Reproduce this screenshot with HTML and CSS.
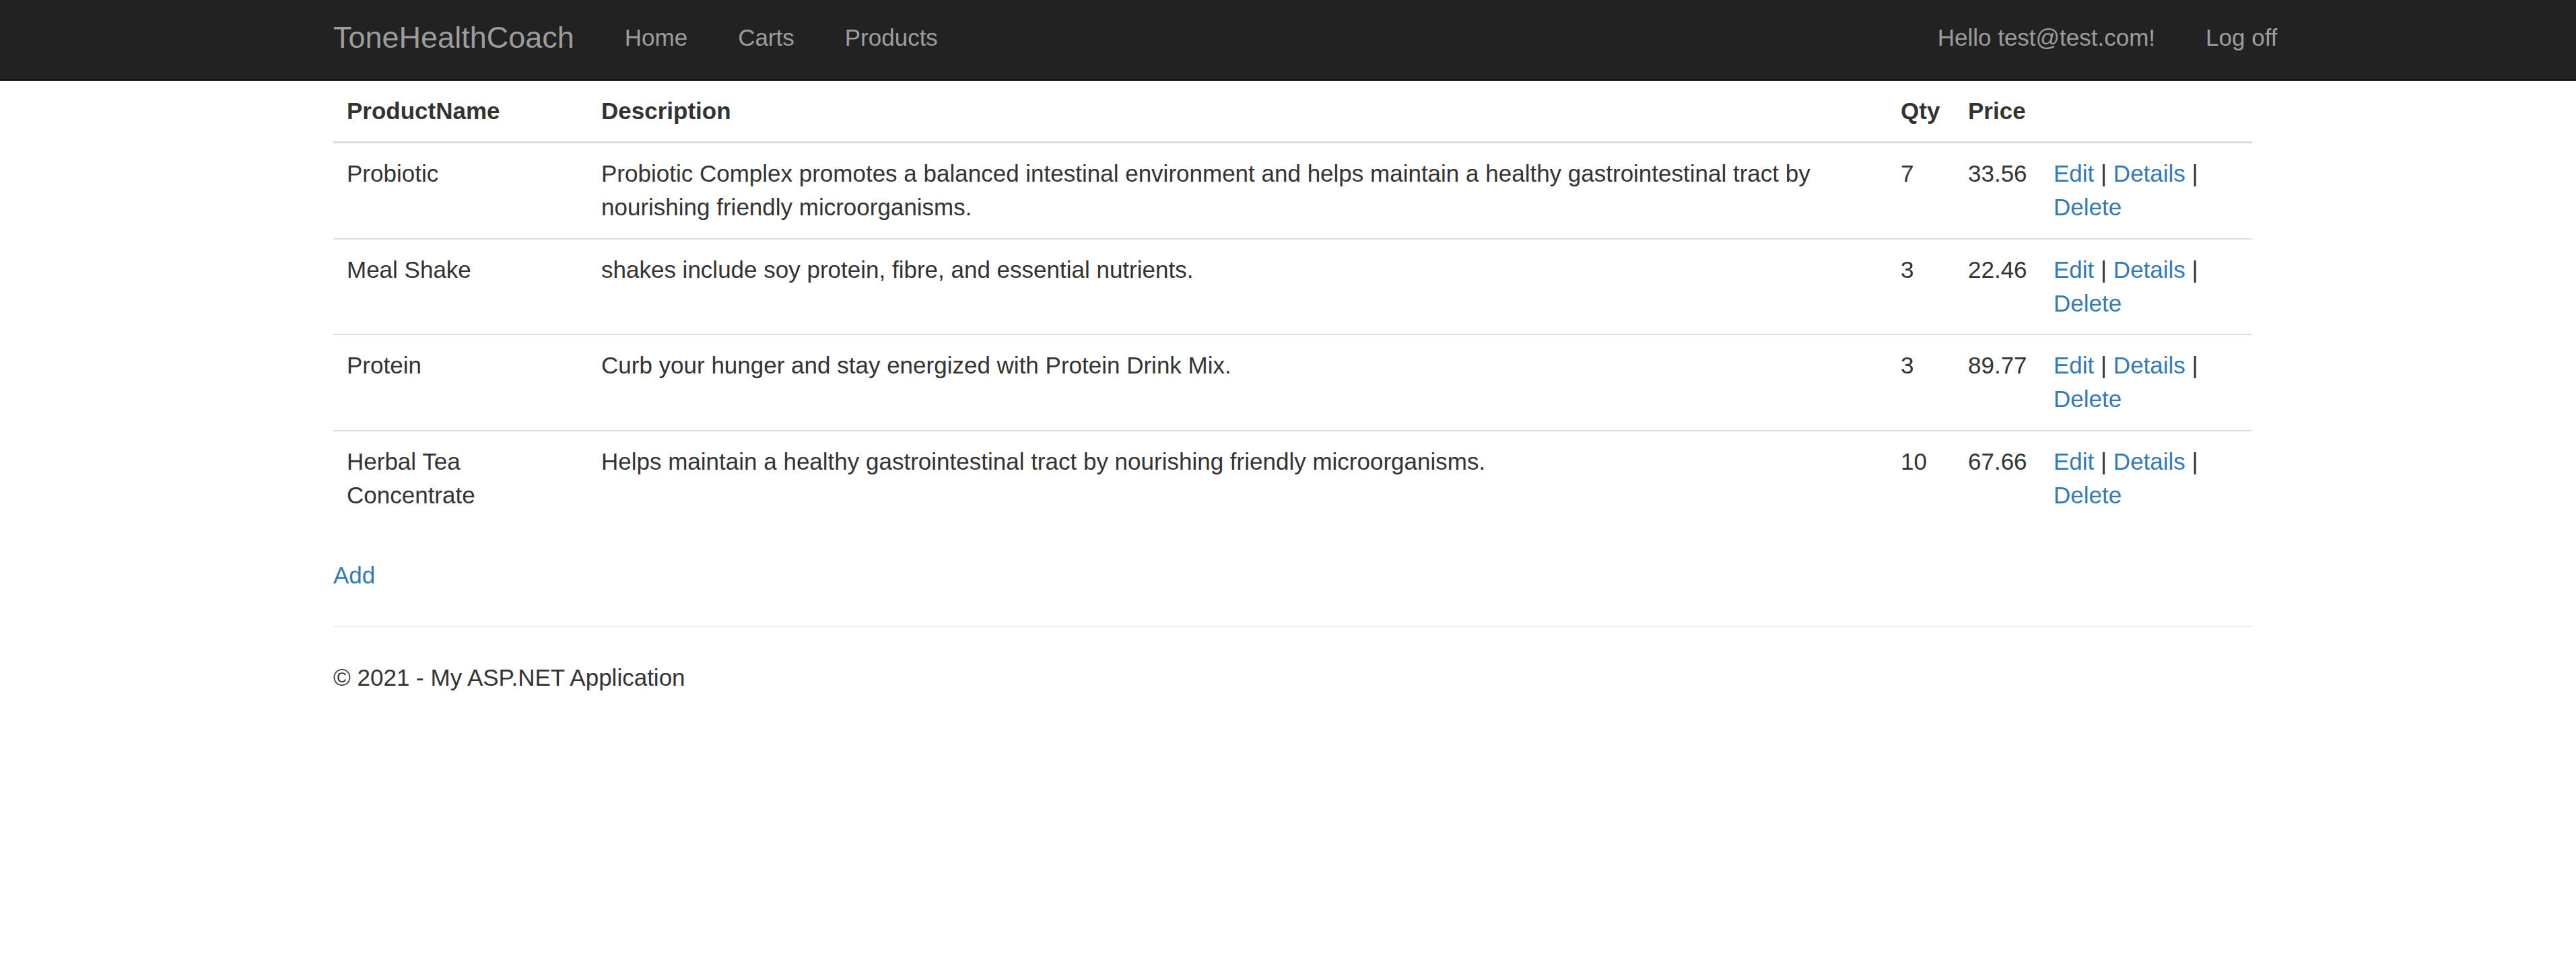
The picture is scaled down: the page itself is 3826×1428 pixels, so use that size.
FILE: index.html
```html
<!DOCTYPE html>
<html lang="en">
<head>
<meta charset="utf-8">
<title>Products - ToneHealthCoach</title>
<link rel="stylesheet" href="styles.css">
</head>
<body>
<header class="navbar">
  <div class="nav-inner">
    <a class="brand" href="#">ToneHealthCoach</a>
    <ul class="nav">
      <li><a href="#">Home</a></li>
      <li><a href="#">Carts</a></li>
      <li><a href="#">Products</a></li>
    </ul>
    <ul class="nav nav-right">
      <li><a href="#">Hello test@test.com!</a></li>
      <li><a href="#">Log off</a></li>
    </ul>
  </div>
</header>
<main class="container">
  <table class="table">
    <colgroup>
      <col class="c-name">
      <col class="c-desc">
      <col class="c-qty">
      <col class="c-price">
      <col class="c-act">
    </colgroup>
    <thead>
      <tr><th>ProductName</th><th>Description</th><th>Qty</th><th>Price</th><th></th></tr>
    </thead>
    <tbody>
      <tr>
        <td>Probiotic</td>
        <td>Probiotic Complex promotes a balanced intestinal environment and helps maintain a healthy gastrointestinal tract by nourishing friendly microorganisms.</td>
        <td>7</td>
        <td>33.56</td>
        <td><a href="#">Edit</a> | <a href="#">Details</a> | <a href="#">Delete</a></td>
      </tr>
      <tr>
        <td>Meal Shake</td>
        <td>shakes include soy protein, fibre, and essential nutrients.</td>
        <td>3</td>
        <td>22.46</td>
        <td><a href="#">Edit</a> | <a href="#">Details</a> | <a href="#">Delete</a></td>
      </tr>
      <tr>
        <td>Protein</td>
        <td>Curb your hunger and stay energized with Protein Drink Mix.</td>
        <td>3</td>
        <td>89.77</td>
        <td><a href="#">Edit</a> | <a href="#">Details</a> | <a href="#">Delete</a></td>
      </tr>
      <tr>
        <td>Herbal Tea Concentrate</td>
        <td>Helps maintain a healthy gastrointestinal tract by nourishing friendly microorganisms.</td>
        <td>10</td>
        <td>67.66</td>
        <td><a href="#">Edit</a> | <a href="#">Details</a> | <a href="#">Delete</a></td>
      </tr>
    </tbody>
  </table>
  <p class="add"><a href="#">Add</a></p>
  <hr class="sep">
  <footer class="footer">
    <p>&copy; 2021 - My ASP.NET Application</p>
  </footer>
</main>
</body>
</html>
```

FILE: styles.css
```css
html, body {
  margin: 0;
  padding: 0;
  background: #fff;
}
body {
  font-family: "Liberation Sans", Arial, Helvetica, sans-serif;
  font-size: 35px;
  line-height: 50px;
  color: #333;
}
a {
  color: #337ab7;
  text-decoration: none;
}

/* Navbar */
.navbar {
  background: #222;
  height: 118px;
  border-bottom: 2px solid #080808;
}
.nav-inner {
  width: 2850px;
  margin-left: 495px;
  display: flex;
  align-items: flex-start;
}
.brand {
  color: #9d9d9d;
  font-size: 45px;
  line-height: 50px;
  padding: 30.5px 37.5px 0;
  margin-left: -37.5px;
}
.nav {
  list-style: none;
  margin: 0;
  padding: 0;
  display: flex;
}
.nav a {
  display: block;
  color: #9d9d9d;
  padding: 30.5px 37.5px 0;
  line-height: 50px;
}
.nav-right {
  margin-left: auto;
  margin-right: -75px;
}

/* Content */
.container {
  width: 2850px;
  margin-left: 495px;
}
.table {
  width: 2850px;
  table-layout: fixed;
  border-collapse: separate;
  border-spacing: 0;
  margin: 0 0 49px;
}
.c-name { width: 378px; }
.c-desc { width: 1930px; }
.c-qty { width: 100px; }
.c-price { width: 127px; }
.c-act { width: 315px; }

.table th {
  text-align: left;
  font-weight: bold;
  vertical-align: bottom;
  padding: 20px;
  border-bottom: 3px solid #ddd;
}
.table td {
  vertical-align: top;
  padding: 20.25px 20px;
  border-top: 2px solid #ddd;
}
.table tbody tr:first-child td {
  border-top: 0;
}

.add {
  margin: 0 0 25px;
}
.sep {
  margin: 50px 0;
  border: 0;
  border-top: 2px solid #eee;
  height: 0;
}
.footer p {
  margin: 0;
}
```
